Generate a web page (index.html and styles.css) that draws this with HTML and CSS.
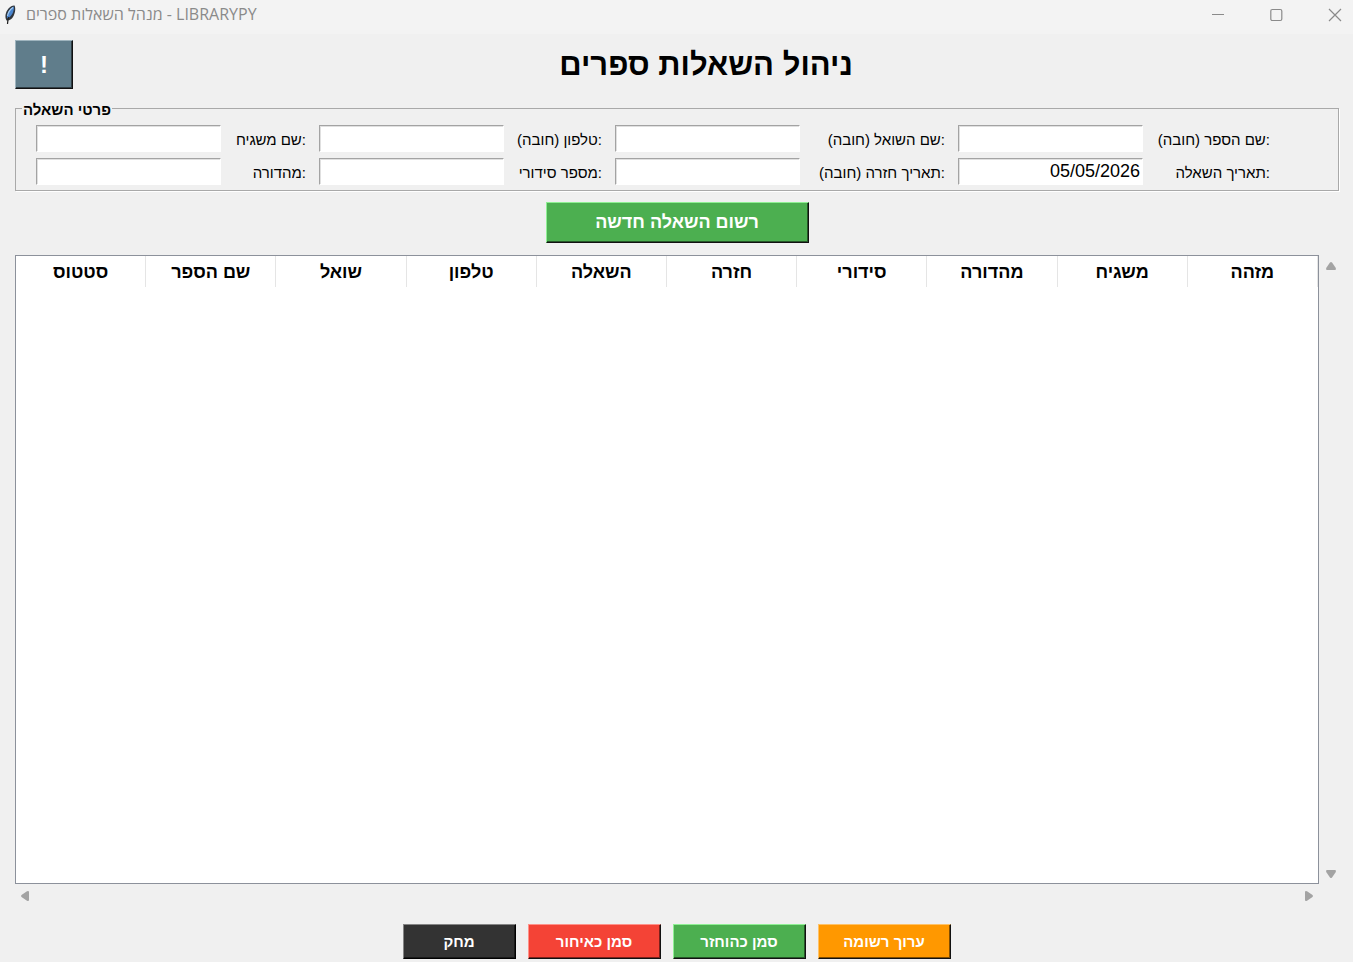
FILE: index.html
```html
<!DOCTYPE html>
<html lang="he">
<head>
  <meta charset="UTF-8" />
  <meta name="viewport" content="width=device-width, initial-scale=1.0" />
  <title>מנהל השאלות ספרים - LIBRARYPY</title>
  <link rel="stylesheet" href="styles.css">
</head>
<body>

  <div class="titlebar">
    <svg class="feather" width="12" height="20" viewBox="0 0 12 20" aria-hidden="true">
      <path d="M10.500 0.500C11.800 3 11.500 8 9 12C7.500 14.500 5 16 2.500 15.500C0.500 12 1.500 7 4.500 3.500C6.500 1.500 8.500 0.300 10.500 0.500Z" fill="#30363e"/>
      <path d="M9.800 1.500C6 3 2.500 8 3 13.500C7.500 12 10.500 6 9.800 1.500Z" fill="#4a86d0"/>
      <path d="M9 2.500C6 4.500 4 8 3.500 11" fill="none" stroke="#a8cdf0" stroke-width="1.200"/>
      <path d="M4.500 12C4 14 3.700 16 3.500 19" fill="none" stroke="#222" stroke-width="1.200"/>
    </svg>
    <span class="titulo-janela">מנהל השאלות ספרים - LIBRARYPY</span>
    <div class="janela-botoes">
      <button type="button" aria-label="מזער"><svg width="14" height="14" viewBox="0 0 14 14"><path d="M0 6.500H12" stroke="#8a8a8a" fill="none"/></svg></button>
      <button type="button" aria-label="הגדל"><svg width="14" height="14" viewBox="0 0 14 14"><rect x="0.800" y="1.500" width="11" height="11" rx="1.500" stroke="#8a8a8a" stroke-width="1.200" fill="none"/></svg></button>
      <button type="button" aria-label="סגור"><svg width="14" height="14" viewBox="0 0 14 14"><path d="M1 1L13 13M13 1L1 13" stroke="#8a8a8a" stroke-width="1.200" fill="none"/></svg></button>
    </div>
  </div>

  <header class="topo">
    <button type="button" class="btn info">!</button>
    <h1>ניהול השאלות ספרים</h1>
  </header>

  <form class="formulario">
    <fieldset>
      <legend>פרטי השאלה</legend>
      <div class="campos">
        <input type="text" id="supervisor" />
        <label for="supervisor">שם משגיח:</label>
        <input type="text" id="phone" />
        <label for="phone">טלפון (חובה):</label>
        <input type="text" id="borrower" />
        <label for="borrower">שם השואל (חובה):</label>
        <input type="text" id="book" />
        <label for="book">שם הספר (חובה):</label>

        <input type="text" id="edition" />
        <label for="edition">מהדורה:</label>
        <input type="text" id="serial" />
        <label for="serial">מספר סידורי:</label>
        <input type="text" id="returnDate" />
        <label for="returnDate">תאריך חזרה (חובה):</label>
        <input type="text" id="loanDate" value="05/05/2026" />
        <label for="loanDate">תאריך השאלה:</label>
      </div>
    </fieldset>
    <button type="button" class="btn verde registrar">רשום השאלה חדשה</button>
  </form>

  <main class="lista">
    <div class="tabela">
      <table>
        <thead>
          <tr>
            <th>סטטוס</th>
            <th>שם הספר</th>
            <th>שואל</th>
            <th>טלפון</th>
            <th>השאלה</th>
            <th>חזרה</th>
            <th>סידורי</th>
            <th>מהדורה</th>
            <th>משגיח</th>
            <th>מזהה</th>
          </tr>
        </thead>
        <tbody></tbody>
      </table>
    </div>
    <div class="rolagem vertical">
      <button type="button" aria-label="למעלה"><svg width="12" height="10" viewBox="0 0 12 10"><path d="M5 1.500Q6 0.500 7 1.500L10.800 7Q11.500 9 10 9H2Q0.500 9 1.200 7Z" fill="#a3a3a3"/></svg></button>
      <button type="button" aria-label="למטה"><svg width="12" height="10" viewBox="0 0 12 10"><path d="M5 8.500Q6 9.500 7 8.500L10.800 3Q11.500 1 10 1H2Q0.500 1 1.200 3Z" fill="#a3a3a3"/></svg></button>
    </div>
    <div class="rolagem horizontal">
      <button type="button" aria-label="שמאלה"><svg width="10" height="12" viewBox="0 0 10 12"><path d="M1.500 5Q0.500 6 1.500 7L7 10.800Q9 11.500 9 10V2Q9 0.500 7 1.200Z" fill="#a3a3a3"/></svg></button>
      <button type="button" aria-label="ימינה"><svg width="10" height="12" viewBox="0 0 10 12"><path d="M8.500 5Q9.500 6 8.500 7L3 10.800Q1 11.500 1 10V2Q1 0.500 3 1.200Z" fill="#a3a3a3"/></svg></button>
    </div>
  </main>

  <footer class="acoes">
    <button type="button" class="btn preto">מחק</button>
    <button type="button" class="btn vermelho">סמן כאיחור</button>
    <button type="button" class="btn verde">סמן כהוחזר</button>
    <button type="button" class="btn laranja">ערוך רשומה</button>
  </footer>

</body>
</html>
```
FILE: styles.css
```css
* {
  box-sizing: border-box;
}
body {
  margin: 0;
  min-height: 100vh;
  display: flex;
  flex-direction: column;
  background: #f0f0f0;
  color: #000;
  font-family: "Liberation Sans", Arial, sans-serif;
}
button {
  font-family: inherit;
  cursor: pointer;
}

/* window title bar */
.titlebar {
  display: flex;
  align-items: center;
  height: 34px;
  padding: 0 4px;
  background: #f3f3f3;
}
.feather {
  margin-bottom: 5px;
}
.titulo-janela {
  flex: 1;
  margin: 0 0 6px 10px;
  font-family: "Open Sans", sans-serif;
  font-size: 16px;
  line-height: 20px;
  color: #8a8a8a;
}
.janela-botoes {
  display: flex;
  gap: 44px;
  padding: 0 7px 4px 0;
}
.janela-botoes button,
.rolagem button {
  display: flex;
  padding: 0;
  border: none;
  background: none;
}

/* raised buttons */
.btn {
  border: 1px solid;
  box-shadow: inset -1px -1px 0 rgba(0, 0, 0, 0.5);
  color: #fff;
  font-weight: bold;
  padding: 0;
}
.verde {
  background: #4caf50;
  border-color: #8ff094 #111 #111 #8ff094;
}
.vermelho {
  background: #f44336;
  border-color: #ff9189 #111 #111 #ff9189;
}
.laranja {
  background: #ff9800;
  border-color: #ffc266 #111 #111 #ffc266;
}
.preto {
  background: #333;
  border-color: #858585 #000 #000 #858585;
}
.info {
  background: #607d8b;
  border-color: #9fb4be #111 #111 #9fb4be;
  width: 58px;
  height: 49px;
  font-size: 24px;
}

.topo {
  display: flex;
  align-items: center;
  padding: 6px 14px 0 15px;
}
.topo h1 {
  flex: 1;
  margin: 0;
  text-align: center;
  font-size: 31px;
  line-height: 48px;
}

.formulario {
  display: flex;
  flex-direction: column;
  align-items: center;
  gap: 11px;
  padding: 8px 14px 0 15px;
}
fieldset {
  align-self: stretch;
  min-width: 0;
  margin: 0;
  padding: 6px 20px 5px 20px;
  border: 1px solid #a9a9a9;
  box-shadow: 1px 1px 0 #fff;
}
legend {
  margin-left: -14px;
  padding: 4px 1px 0;
  font-size: 15px;
  line-height: 18px;
  font-weight: bold;
}
.campos {
  display: grid;
  grid-template-columns: 185px 72px 185px 85px 185px 132px 185px 114px;
  gap: 6px 13px;
  align-items: center;
}
.campos input {
  width: 185px;
  height: 27px;
  padding: 0 2px;
  border: 1px solid;
  border-color: #a3a3a3 #fff #fff #a3a3a3;
  box-shadow: inset 1px 1px 0 #e0e0e0;
  background: #fff;
  font-family: "Liberation Sans", sans-serif;
  font-size: 18px;
  text-align: right;
}
.campos label {
  padding-top: 2px;
  text-align: right;
  font-size: 15px;
  line-height: 20px;
  white-space: nowrap;
}
.registrar {
  width: 263px;
  height: 41px;
  font-size: 18px;
}

/* table with its scrollbars */
.lista {
  flex: 1;
  display: grid;
  grid-template-columns: 1fr 24px;
  grid-template-rows: 1fr 23px;
  padding: 12px 10px 0 15px;
}
.tabela {
  background: #fff;
  border: 1px solid #8c919b;
}
table {
  width: 100%;
  table-layout: fixed;
  border-spacing: 0;
}
th {
  height: 31px;
  padding: 0;
  border-right: 1px solid #e5e5e5;
  font-size: 18px;
  line-height: 24px;
}
.rolagem {
  display: flex;
  justify-content: space-between;
  align-items: center;
}
.vertical {
  flex-direction: column;
  padding: 6px 0 5px;
}
.horizontal {
  padding: 0 5px;
}

.acoes {
  display: flex;
  justify-content: center;
  gap: 12px;
  padding: 17px 0 3px;
}
.acoes .btn {
  width: 133px;
  height: 35px;
  font-size: 15px;
}
.acoes .preto {
  width: 113px;
}
```
